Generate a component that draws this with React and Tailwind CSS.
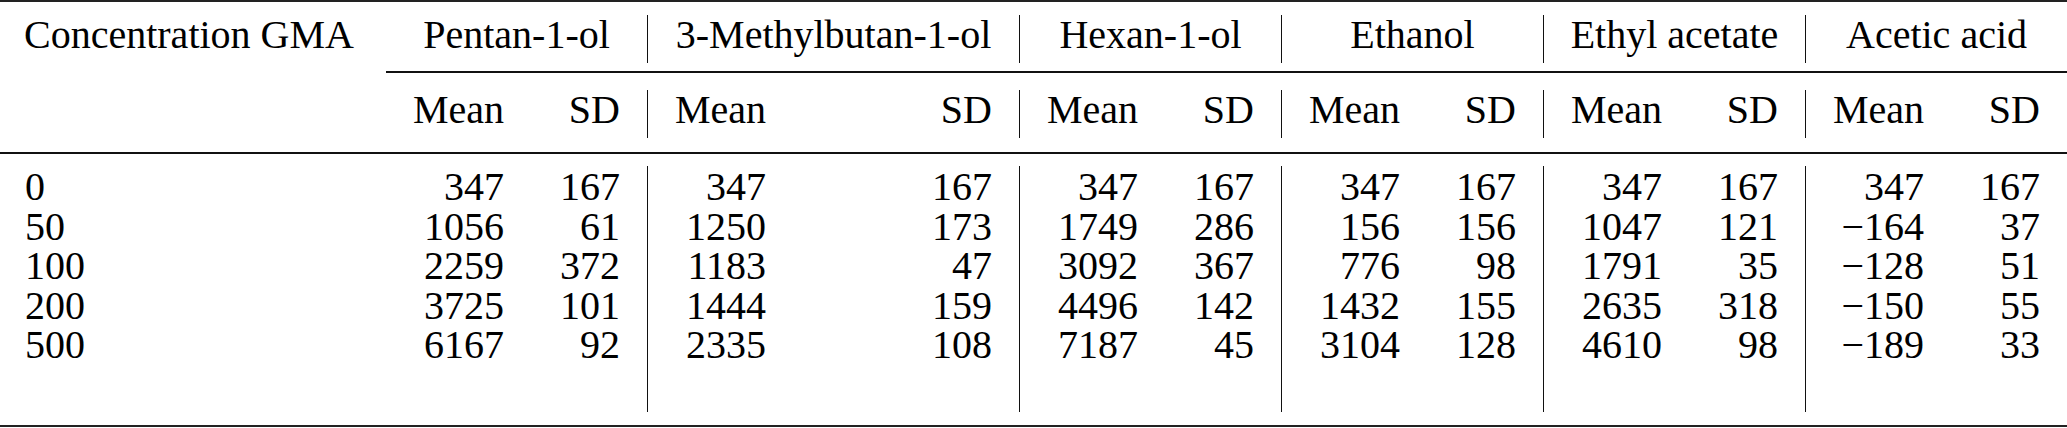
import React from "react";

const groups = [
  { name: "Pentan-1-ol", w: "w-[261px]", bar: false, data: [["347", "167"], ["1056", "61"], ["2259", "372"], ["3725", "101"], ["6167", "92"]] },
  { name: "3-Methylbutan-1-ol", w: "w-[372px]", bar: true, data: [["347", "167"], ["1250", "173"], ["1183", "47"], ["1444", "159"], ["2335", "108"]] },
  { name: "Hexan-1-ol", w: "w-[262px]", bar: true, data: [["347", "167"], ["1749", "286"], ["3092", "367"], ["4496", "142"], ["7187", "45"]] },
  { name: "Ethanol", w: "w-[262px]", bar: true, data: [["347", "167"], ["156", "156"], ["776", "98"], ["1432", "155"], ["3104", "128"]] },
  { name: "Ethyl acetate", w: "w-[262px]", bar: true, data: [["347", "167"], ["1047", "121"], ["1791", "35"], ["2635", "318"], ["4610", "98"]] },
  { name: "Acetic acid", w: "w-[262px]", bar: true, data: [["347", "167"], ["\u2212164", "37"], ["\u2212128", "51"], ["\u2212150", "55"], ["\u2212189", "33"]] },
];

const labels = ["0", "50", "100", "200", "500"];

function Group({ g, children, className = "" }) {
  return (
    <div className={`${g.w} h-full shrink-0 ${g.bar ? "border-l border-[#111]" : ""} ${className}`}>
      {children}
    </div>
  );
}

export default function App() {
  return (
    <div className="w-[2067px] h-[428px] overflow-hidden bg-white text-black font-[family-name:Liberation_Serif,Times_New_Roman,serif] text-[40px]">
      {/* top rule */}
      <div className="h-[2px] bg-[#222]" />

      {/* header row 1 */}
      <div className="pt-[13px] pb-[8px]">
        <div className="flex h-[48px] leading-[40px]">
          <div className="w-[386px] shrink-0 pl-[24px] whitespace-nowrap">Concentration GMA</div>
          {groups.map((g) => (
            <Group key={g.name} g={g} className="text-center whitespace-nowrap">
              {g.name}
            </Group>
          ))}
        </div>
      </div>

      {/* cmidrule */}
      <div className="ml-[386px] h-[2px] bg-[#111]" />

      {/* header row 2 */}
      <div className="pt-[17px] pb-[14px]">
        <div className="flex h-[48px] leading-[40px]">
          <div className="w-[386px] shrink-0" />
          {groups.map((g) => (
            <Group key={g.name} g={g} className="flex justify-between px-[27px]">
              <div className="w-[91px] text-left">Mean</div>
              <div className="text-right">SD</div>
            </Group>
          ))}
        </div>
      </div>

      {/* midrule */}
      <div className="h-[2px] bg-[#111]" />

      {/* body */}
      <div className="pt-[12px] pb-[13px]">
        <div className="flex h-[246px] leading-[39.5px]">
          <div className="w-[386px] shrink-0 pl-[25px] pt-[1px]">
            {labels.map((l) => (
              <div key={l}>{l}</div>
            ))}
          </div>
          {groups.map((g) => (
            <Group key={g.name} g={g} className="flex justify-between px-[27px] pt-[1px]">
              <div className="w-[91px] text-right">
                {g.data.map((d, i) => (
                  <div key={i}>{d[0]}</div>
                ))}
              </div>
              <div className="text-right">
                {g.data.map((d, i) => (
                  <div key={i}>{d[1]}</div>
                ))}
              </div>
            </Group>
          ))}
        </div>
      </div>

      {/* bottom rule */}
      <div className="h-[2px] bg-[#222]" />
    </div>
  );
}
